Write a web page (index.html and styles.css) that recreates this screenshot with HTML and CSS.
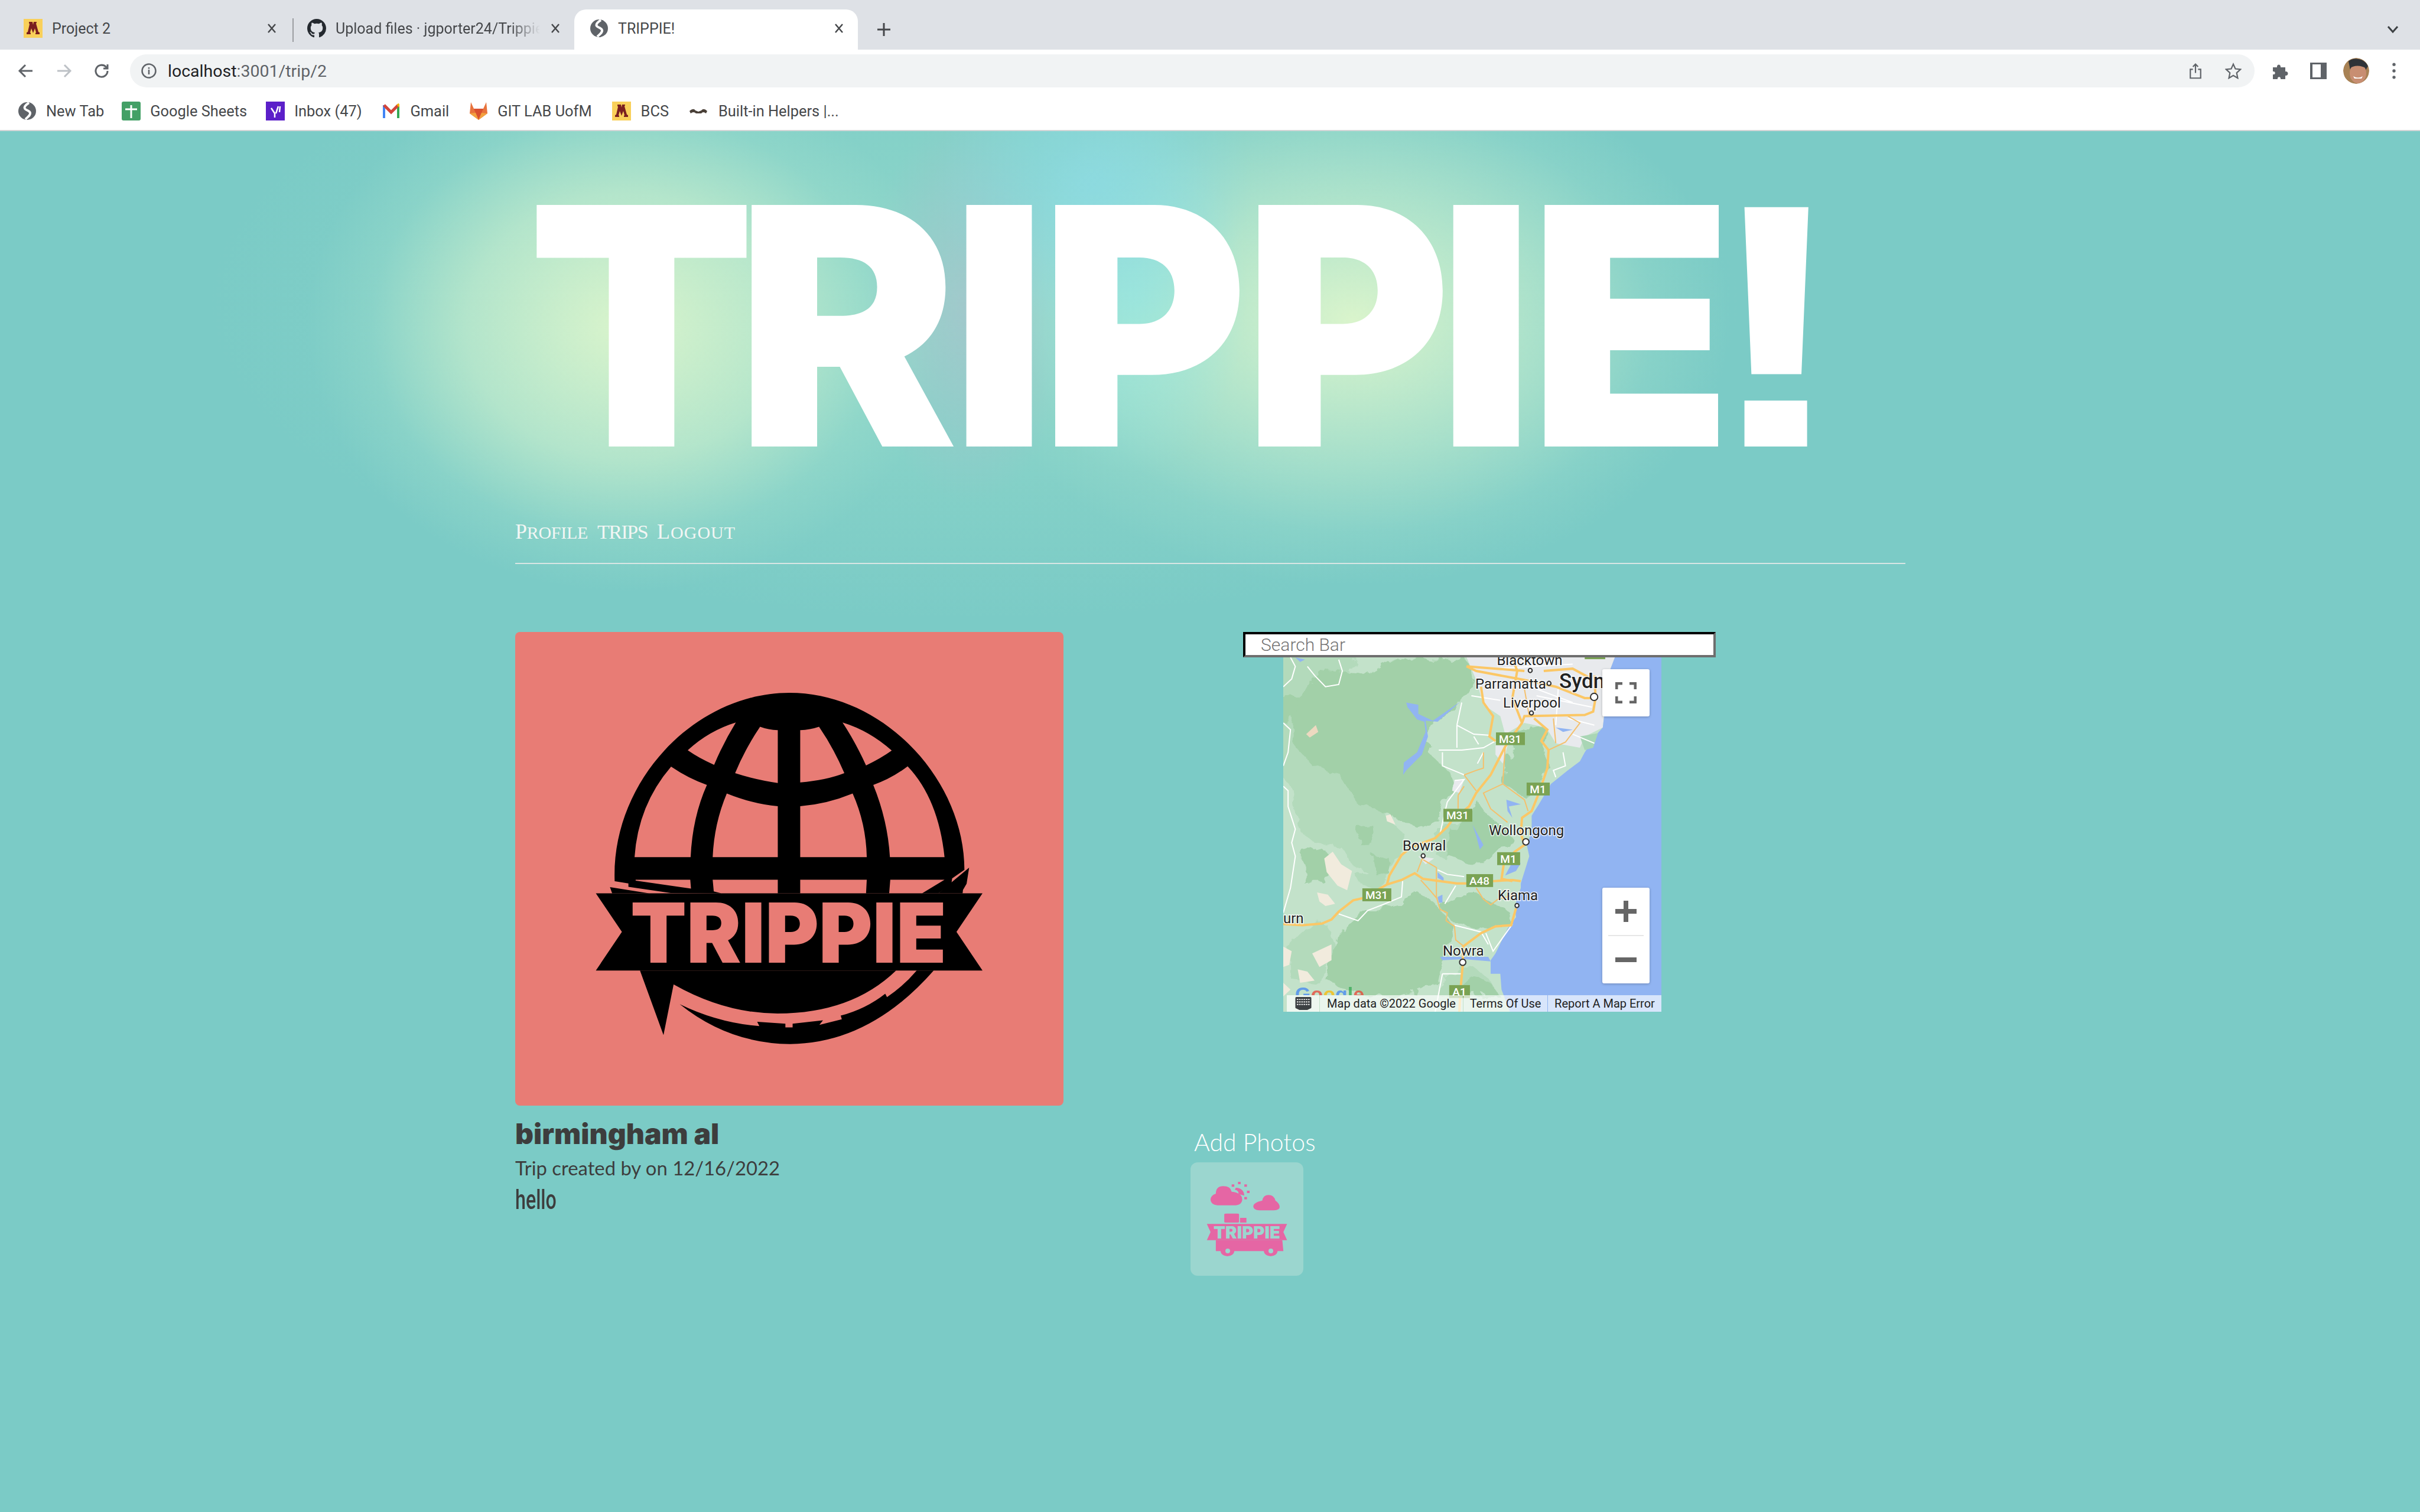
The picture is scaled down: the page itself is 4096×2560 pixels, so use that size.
FILE: index.html
```html
<!DOCTYPE html>
<html lang="en">
<head>
    <meta charset="UTF-8">
    <title>TRIPPIE!</title>
    <link rel="stylesheet" href="styles.css">
</head>
<body>
    <svg class="defs" width="0" height="0">
        <symbol id="globe-fav" viewBox="0 0 32 32">
            <circle cx="16" cy="16" r="15" fill="#5f6368"/>
            <path d="M19 2C13 6 10 9 12 12s8 3 9 7-4 7-8 11" fill="none" stroke="#fff" stroke-width="4"/>
        </symbol>
        <symbol id="umn-fav" viewBox="0 0 32 32">
            <rect width="32" height="32" fill="#f9d05a"/>
            <path d="M5 26h7v-2l-1-1 2-7 3 8 3-8 2 7-1 1v2h7v-3l-2-1-4-14 1-2V5h-5l-1 5-1-5H9v2l1 2-3 13-2 1z" fill="#7a1f1f"/>
        </symbol>
        <filter id="rough" x="-5%" y="-5%" width="110%" height="110%">
            <feTurbulence type="fractalNoise" baseFrequency=".012" numOctaves="4" seed="7"/>
            <feDisplacementMap in="SourceGraphic" scale="70"/>
        </filter>
    </svg>

    <div class="browser">
        <div class="tabstrip">
            <div class="tab">
                <svg class="fav"><use href="#umn-fav"/></svg>
                <span class="tab-title">Project 2</span>
                <svg class="tab-x" viewBox="0 0 16 16"><path d="M2 1l12 14M14 1L2 15"/></svg>
            </div>
            <div class="tab tab-sep">
                <svg class="fav" viewBox="0 0 16 16"><path fill="#24292f" d="M8 0C3.58 0 0 3.58 0 8c0 3.54 2.29 6.53 5.47 7.59.4.07.55-.17.55-.38 0-.19-.01-.82-.01-1.49-2.01.37-2.53-.49-2.69-.94-.09-.23-.48-.94-.82-1.13-.28-.15-.68-.52-.01-.53.63-.01 1.08.58 1.23.82.72 1.21 1.87.87 2.33.66.07-.52.28-.87.51-1.07-1.78-.2-3.64-.89-3.64-3.95 0-.87.31-1.59.82-2.15-.08-.2-.36-1.02.08-2.12 0 0 .67-.21 2.2.82.64-.18 1.32-.27 2-.27.68 0 1.36.09 2 .27 1.53-1.04 2.2-.82 2.2-.82.44 1.1.16 1.92.08 2.12.51.56.82 1.27.82 2.15 0 3.07-1.87 3.75-3.65 3.95.29.25.54.73.54 1.48 0 1.07-.01 1.93-.01 2.2 0 .21.15.46.55.38A8.013 8.013 0 0016 8c0-4.42-3.58-8-8-8z"/></svg>
                <span class="tab-title tab-fade">Upload files · jgporter24/Trippie</span>
                <svg class="tab-x" viewBox="0 0 16 16"><path d="M2 1l12 14M14 1L2 15"/></svg>
            </div>
            <div class="tab tab-active">
                <svg class="fav"><use href="#globe-fav"/></svg>
                <span class="tab-title">TRIPPIE!</span>
                <svg class="tab-x" viewBox="0 0 16 16"><path d="M2 1l12 14M14 1L2 15"/></svg>
            </div>
            <svg class="tab-new" viewBox="0 0 24 24"><path d="M12 1v22M1 12h22"/></svg>
            <svg class="tab-list" viewBox="0 0 20 14"><path d="M2 2l8 9 8-9"/></svg>
        </div>

        <div class="toolbar">
            <svg class="nav-btn" viewBox="0 0 28 28"><path d="M25 14H4M13 4L3 14l10 10"/></svg>
            <svg class="nav-btn nav-off" viewBox="0 0 28 28"><path d="M3 14h21M15 4l10 10-10 10"/></svg>
            <svg class="nav-btn" viewBox="0 0 28 28"><path d="M24 14a10 10 0 1 1-3-7l3 3M24 3v7h-7"/></svg>
            <div class="omnibox">
                <svg class="info" viewBox="0 0 28 28"><circle cx="14" cy="14" r="11.5"/><path d="M14 12v8M14 8v2.5"/></svg>
                <span class="url"><b>localhost</b>:3001/trip/2</span>
                <svg class="omni-icon" viewBox="0 0 24 32"><path d="M12 20V3M7 8l5-5 5 5M7 13H2v17h20V13h-5"/></svg>
                <svg class="omni-icon" viewBox="0 0 32 32"><path d="M16 3l4 9 10 1-7.500 7 2 10-8.500-5-8.500 5 2-10L2 13l10-1z"/></svg>
            </div>
            <div class="tool-icons">
                <svg class="tool-icon tool-puzzle" viewBox="0 0 30 30"><path fill="#5f6368" d="M2 9h7c-1-6 7-6 6 0h8v7c6-1 6 8 0 7v6H15c1-5-6-5-5 0H2v-8c5 1 5-6 0-5z"/></svg>
                <svg class="tool-icon" viewBox="0 0 30 30"><path fill="#5f6368" fill-rule="evenodd" d="M1 1h28v28H1zM5 4v22h14V4z"/></svg>
                <svg class="avatar" viewBox="0 0 44 44">
                    <circle cx="22" cy="22" r="22" fill="#a88255"/>
                    <path d="M9 6C14 0 34-2 42 14L36 24 12 20z" fill="#2f3338"/>
                    <ellipse cx="25" cy="26" rx="14" ry="17" fill="#c88e72"/>
                    <path d="M11 18c6-6 20-6 28 0V9C30 3 16 3 11 9z" fill="#2f3338"/>
                    <path d="M17 31q8 5 16 0l-2 4h-12z" fill="#fff"/>
                    <path d="M0 30l10 14H2z" fill="#22221f"/>
                </svg>
                <svg class="tool-icon tool-dots" viewBox="0 0 8 36"><circle cx="4" cy="5" r="3.200" fill="#5f6368"/><circle cx="4" cy="18" r="3.200" fill="#5f6368"/><circle cx="4" cy="31" r="3.200" fill="#5f6368"/></svg>
            </div>
        </div>

        <div class="bookmarks">
            <a class="bm bm-1"><svg class="fav"><use href="#globe-fav"/></svg>New Tab</a>
            <a class="bm bm-2"><svg class="fav" viewBox="0 0 32 32"><rect width="32" height="32" rx="3" fill="#43a066"/><path d="M16 6v22M6 13h20" stroke="#fff" stroke-width="3"/></svg>Google Sheets</a>
            <a class="bm bm-3"><svg class="fav" viewBox="0 0 32 32"><rect width="32" height="32" fill="#5b1fc9"/><path d="M9 11l6 9v7M21 8l-4 12M24 8l-1 10" stroke="#fff" stroke-width="2.500" fill="none"/></svg>Inbox (47)</a>
            <a class="bm bm-4"><svg class="fav fav-gmail" viewBox="0 0 28 32"><path d="M2 28V6" stroke="#4285f4" stroke-width="4"/><path d="M26 28V6" stroke="#34a853" stroke-width="4"/><path d="M2 6l12 12L26 6" fill="none" stroke="#d2453a" stroke-width="5"/><path d="M25 4l3 4" stroke="#f4b400" stroke-width="4"/></svg>Gmail</a>
            <a class="bm bm-5"><svg class="fav" viewBox="0 0 32 32"><path d="M16 31L1 20 3 1l5 11h16l5-11 2 19z" fill="#e8733c"/><path d="M16 31L8 12h16z" fill="#d9502f"/><path d="M1 20l15 11-5-12zM31 20L16 31l5-12z" fill="#f2a23f"/></svg>GIT LAB UofM</a>
            <a class="bm bm-6"><svg class="fav"><use href="#umn-fav"/></svg>BCS</a>
            <a class="bm bm-7"><svg class="fav" viewBox="0 0 32 32"><path d="M1 16q7-6 10-1l5 2 5-2q4-5 10 1l-2 4q-5-4-8 0h-9q-4-4-9 0z" fill="#4a4038"/></svg>Built-in Helpers |...</a>
        </div>
    </div>

    <div class="page">
        <div class="wrap">
            <h1 class="hero-title"><span>T</span><span>R</span><span>I</span><span>P</span><span>P</span><span>I</span><span>E</span><span class="hero-bang">!</span></h1>
            <nav class="site-nav">
                <a>Profile</a>
                <a class="nav-trips">TRIPS</a>
                <a class="nav-logout">Logout</a>
            </nav>

            <div class="trip">
                <div class="trip-left">
                    <div class="trip-card">
                        <svg class="trip-logo" viewBox="0 0 928 802">
                            <g transform="scale(.6122 .523) translate(-20 -20)">
                                <path fill-rule="evenodd" d="M295 827C285 500 520 217 778 217C1040 217 1262 500 1262 790L1228 818L1226 835L1190 866L1145 866L1207 822L1057 822L1054 866L990 866L992 822L808 822L808 866L746 866L746 822L566 822L569 860L590 866L450 865L333 845L333 834Z
                                M497 403Q555 340 630 313Q595 380 570 450Q530 430 497 403Z
                                M697 327Q720 337 746 338L746 509Q680 497 628 477Q655 400 697 327Z
                                M860 327Q835 337 808 338L808 507Q880 500 930 477Q900 395 860 327Z
                                M925 313Q1000 340 1061 404Q1030 430 990 452Q960 375 925 313Z
                                M451 456Q500 495 550 515Q510 620 505 749L350 749Q360 580 451 456Z
                                M605 543Q680 578 746 584L746 749L566 749Q570 640 605 543Z
                                M808 584Q880 578 953 543Q990 640 992 749L808 749Z
                                M1105 455Q1190 560 1207 749L1056 749Q1050 630 1010 515Q1060 495 1105 455Z
                                M353 822L504 822L506 851L353 825Z"/>
                                <path d="M243 866H1312L1240 991L1312 1116H243L315 991Z"/>
                                <path d="M282 846L390 866H288Z"/>
                                <path d="M1275 783L1268 835L1258 855L1257 866H1190Z"/>
                                <path d="M365 1116L430 1325L458 1161Q600 1255 745 1255Q950 1255 1073 1116Z"/>
                                <path d="M475 1225Q580 1285 695 1296L689 1282L767 1288V1300H787V1288L871 1277L861 1292L923 1274L920 1262Q990 1240 1043 1191L1048 1202Q1095 1165 1130 1116H1177Q1000 1352 780 1354Q610 1352 475 1225Z"/>
                            </g>
                            <text class="logo-text" x="195" y="560" textLength="535" lengthAdjust="spacingAndGlyphs">TRIPPIE</text>
                        </svg>
                    </div>
                    <h2 class="trip-name">birmingham al</h2>
                    <p class="trip-meta">Trip created by on 12/16/2022</p>
                    <p class="trip-desc">hello</p>
                </div>

                <div class="trip-right">
                    <input class="search" type="text" placeholder="Search Bar">
                    <div class="map">
                        <svg class="map-svg" viewBox="0 0 640 600">
                            <g transform="scale(.4082 .3827)">
                                <rect width="1568" height="1568" fill="#c3e2ca"/>
                                <g fill="#b3dabb" filter="url(#rough)">
                                    <path d="M-40 -40H300L200 300L300 460L420 700L520 800L470 880L420 960L300 930L240 840L130 820L60 760L40 600L-40 460Z"/>
                                    <path d="M640 760L700 720L760 700L680 900L620 860Z"/>
                                    <path d="M20 1230L180 1180L220 1300L150 1440L30 1420Z"/>
                                    <path d="M660 1420L790 1370L850 1420L900 1500H640Z"/>
                                    <path d="M300 960L420 900L440 960L400 1030L320 1000Z"/>
                                </g>
                                <g fill="#a2d0a8" filter="url(#rough)">
                                    <path d="M60 170L180 60L330 70L430 10L750 0L790 100L740 200L650 290L600 340L600 420L680 500L710 560L660 650L640 720L560 760L440 690L380 670L300 640L230 510L120 480L40 380Z"/>
                                    <path d="M-30 170L60 170L60 270L-30 300Z"/>
                                    <path d="M1040 290L1100 320L1080 430L1100 480L1040 610L1000 620L910 560L920 440L970 340Z"/>
                                    <path d="M790 620L840 690L920 760L950 800L900 860L830 910L770 910L680 880L690 760L750 690Z"/>
                                    <path d="M540 1020L640 1100L700 1180L710 1270L660 1330L640 1430L540 1490L340 1500L180 1430L220 1230L340 1130L490 1090Z"/>
                                    <path d="M700 1040L800 1040L880 1100L930 1120L940 1180L820 1210L700 1170L650 1100Z"/>
                                    <path d="M90 860L160 840L200 900L170 1000L90 1000Z"/>
                                    <path d="M310 750L370 740L380 830L320 830Z"/>
                                    <path d="M370 870L430 880L440 960L390 970Z"/>
                                    <path d="M780 1420L860 1440L900 1500H700Z"/>
                                </g>
                                <g fill="#f1ebdd">
                                    <path d="M170 890L205 860L240 915L285 945L265 1030L225 1010L180 950Z"/>
                                    <path d="M140 1040L185 1050L215 1090L175 1100L150 1080Z"/>
                                    <path d="M425 700L445 695L465 740L430 725Z"/>
                                    <path d="M0 1280L35 1300L25 1360L0 1370Z"/>
                                    <path d="M120 1310L200 1270L200 1340L150 1370Z"/>
                                    <path d="M60 1380L100 1390L130 1430L70 1440Z"/>
                                    <path d="M0 1440L30 1470L0 1500Z"/>
                                </g>
                                <path d="M95 340L135 300L145 330L110 355Z" fill="#edd9c0"/>
                                <g fill="#e8eaed">
                                    <path d="M760 0H1375L1350 70L1325 310L1250 350L1230 400L1130 380L1090 310L1000 290L920 340L900 260L830 210L800 100Z"/>
                                    <path d="M880 390L930 390L910 470L880 430Z"/>
                                    <path d="M710 545L750 540L730 600L700 590Z"/>
                                    <path d="M560 880L625 890L590 915Z"/>
                                </g>
                                <path d="M1375 0H1568V1568H940L905 1470L900 1400L860 1400L860 1340L880 1310L930 1200L965 1150L960 1100L985 1020L985 1000L1020 880L1010 830L1030 770L1030 700L1060 650L1110 560L1180 500L1230 460L1250 420L1300 340L1325 310L1350 70Z" fill="#91b4f2"/>
                                <path d="M1230 350L1305 335L1285 400L1250 410Z" fill="#a9d6b5"/>
                                <g fill="#91b4f2">
                                    <path d="M510 200L560 210L560 250L620 280L735 195L640 285L590 280L600 350L575 430L510 500L497 520L500 465L555 420L590 330L585 285L555 275L515 220Z"/>
                                    <path d="M925 630L985 650L935 660L950 710L930 680Z"/>
                                    <path d="M785 740L830 830L815 850L800 790Z"/>
                                    <path d="M640 950L665 975L665 990L640 975Z"/>
                                    <path d="M640 1060L660 1050L660 1085L645 1085Z"/>
                                    <path d="M945 915L985 910L965 945L920 965Z"/>
                                    <path d="M50 0L90 10L70 20Z"/>
                                    <path d="M1130 310L1200 320L1160 330Z"/>
                                    <path d="M650 1325L850 1325L860 1345L750 1335L660 1340Z"/>
                                </g>
                                <g class="map-white">
                                    <path d="M0 130L35 95L50 40L30 0M100 40L130 80L175 130L230 120L245 60L230 10"/>
                                    <path d="M0 290L30 320L20 420L0 480M0 570L20 590L20 660L50 760L35 820L50 880L30 1020L0 1130"/>
                                    <path d="M230 1135L310 1165L350 1120L410 1095L490 1060L495 990"/>
                                    <path d="M645 410L740 410L830 400L880 370M660 420L660 480L740 515L750 520"/>
                                    <path d="M720 300L790 340L860 345M720 300L720 400M790 350L810 385M830 420L805 470"/>
                                    <path d="M740 200L720 300M780 170L900 190M680 640L750 540L710 545M680 640L650 780"/>
                                    <path d="M640 940L680 960L750 970M715 1010L670 1090M710 1185L820 1215L850 1270M660 1400L740 1400M630 1568L660 1400"/>
                                    <path d="M1160 420L1170 480L1120 500L1130 530M840 1220L870 1300L950 1180"/>
                                    <path d="M1000 120L1200 200M1130 300L1140 140M1050 170L1280 220M1180 270L1290 300M1200 340L1290 380M880 50L1200 30"/>
                                </g>
                                <g class="map-road-thin">
                                    <path d="M920 400L910 560L830 600L860 670L930 730M910 560L1000 630L1015 680"/>
                                    <path d="M750 520L800 500L830 490L830 420M750 520L800 590M725 610L750 570M725 610L725 670"/>
                                    <path d="M580 880L555 950M580 895L635 930L635 1060L650 1115L680 1130L675 1165L710 1190L715 1250L745 1275"/>
                                    <path d="M570 985L600 1020L640 1070M800 1020L830 1070L860 1095L890 1070L960 1050"/>
                                    <path d="M1100 410L1170 375L1230 290L1180 260M1120 270L1130 380M1000 140L1020 260"/>
                                </g>
                                <g class="map-road">
                                    <path d="M0 1180L80 1185L160 1178L200 1160L230 1125L290 1075L330 1065L430 1005L490 985L545 955L580 980L720 1000L760 1000L870 990L950 985L985 990"/>
                                    <path d="M430 1005L440 965L490 875L530 840L630 800L680 750L700 720L770 660L800 600L860 520L920 395L990 290L1000 260L1250 255L1285 240L1295 180L1290 80"/>
                                    <path d="M1100 410L1095 490L1060 600L1030 680L990 710L985 780L1000 830L960 860L915 910L905 980L950 990"/>
                                    <path d="M1100 410L1070 370L1095 320L1040 270M760 40L800 60L1000 100L1130 130L1250 180L1290 180"/>
                                    <path d="M760 40L1000 60M1080 60L1200 50L1270 90M990 290L950 180L970 60L950 0M820 130L830 200L870 260L855 350L880 370"/>
                                    <path d="M745 1350L745 1280L820 1220L880 1190L945 1185L965 1110M745 1350L735 1470L730 1568"/>
                                </g>
                                <g fill="#7aa354">
                                    <rect x="882" y="332" width="120" height="56"/>
                                    <rect x="1009" y="554" width="96" height="57"/>
                                    <rect x="664" y="670" width="120" height="57"/>
                                    <rect x="887" y="862" width="95" height="57"/>
                                    <rect x="759" y="959" width="111" height="57"/>
                                    <rect x="328" y="1022" width="120" height="57"/>
                                    <rect x="688" y="1450" width="86" height="57"/>
                                    <rect x="1250" y="-40" width="85" height="48"/>
                                </g>
                                <g class="map-dot">
                                    <ellipse cx="1289" cy="175" rx="15" ry="16"/>
                                    <ellipse cx="1024" cy="58" rx="8" ry="9"/>
                                    <ellipse cx="1102" cy="115" rx="8" ry="9"/>
                                    <ellipse cx="1029" cy="246" rx="8" ry="9"/>
                                    <ellipse cx="1006" cy="816" rx="13" ry="14"/>
                                    <ellipse cx="580" cy="878" rx="8" ry="9"/>
                                    <ellipse cx="969" cy="1098" rx="8" ry="9"/>
                                    <ellipse cx="744" cy="1349" rx="13" ry="14"/>
                                </g>
                            </g>
                            <text class="map-label" x="417" y="13" text-anchor="middle">Blacktown</text>
                            <text class="map-label" x="325" y="53">Parramatta</text>
                            <text class="map-label map-city" x="467" y="52">Sydney</text>
                            <text class="map-label" x="372" y="85">Liverpool</text>
                            <text class="map-label" x="348" y="301">Wollongong</text>
                            <text class="map-label" x="202" y="327">Bowral</text>
                            <text class="map-label" x="363" y="411">Kiama</text>
                            <text class="map-label" x="270" y="505">Nowra</text>
                            <text class="map-label" x="0" y="450">urn</text>
                            <text class="map-shield" x="384" y="145">M31</text>
                            <text class="map-shield" x="431" y="230">M1</text>
                            <text class="map-shield" x="295" y="274">M31</text>
                            <text class="map-shield" x="381" y="348">M1</text>
                            <text class="map-shield" x="332" y="385">A48</text>
                            <text class="map-shield" x="158" y="409">M31</text>
                            <text class="map-shield" x="298" y="573">A1</text>
                        </svg>
                        <button class="map-btn map-full">
                            <svg viewBox="0 0 36 36"><path d="M2 12V2h10M24 2h10v10M34 24v10H24M12 34H2V24"/></svg>
                        </button>
                        <div class="map-zoom">
                            <button class="map-zoom-btn"><span class="zoom-plus"></span></button>
                            <span class="map-zoom-sep"></span>
                            <button class="map-zoom-btn"><span class="zoom-minus"></span></button>
                        </div>
                        <span class="google"><i class="g-b">G</i><i class="g-r">o</i><i class="g-y">o</i><i class="g-b">g</i><i class="g-g">l</i><i class="g-r">e</i></span>
                        <div class="map-foot">
                            <span class="foot-kbd">
                                <svg viewBox="0 0 32 26"><path fill="#3c4043" d="M2 0h28a2 2 0 0 1 2 2v19a2 2 0 0 1-2 2l-6 3H8l-6-3a2 2 0 0 1-2-2V2a2 2 0 0 1 2-2z"/><path stroke="#fff" stroke-width="2" stroke-dasharray="3 1.500" d="M3 5h26M3 10h26M3 15h26"/></svg>
                            </span>
                            <span class="foot-item foot-data">Map data ©2022 Google</span>
                            <span class="foot-item foot-terms">Terms Of Use</span>
                            <span class="foot-item foot-error">Report A Map Error</span>
                        </div>
                    </div>
                    <div class="photos">
                        <p class="photos-label">Add Photos</p>
                        <div class="photo-thumb">
                            <svg viewBox="0 0 191 192">
                                <g fill="#e566a4" transform="scale(.893 .3333) translate(-1294 -321)">
                                    <path d="M1345 539Q1332 535 1332 510Q1332 490 1342 480Q1342 442 1356 442Q1370 442 1372 470Q1392 475 1392 510Q1392 535 1380 539Z"/>
                                    <path d="M1425 565Q1413 562 1413 545Q1413 525 1430 515Q1432 487 1442 487Q1452 487 1455 515Q1463 530 1463 548Q1463 562 1452 565Z"/>
                                    <path d="M1380 450Q1395 452 1396 490L1385 482Q1386 465 1378 460Z"/>
                                    <rect x="1384" y="420" width="5" height="12"/>
                                    <rect x="1372" y="433" width="5" height="12"/>
                                    <rect x="1396" y="433" width="5" height="12"/>
                                    <rect x="1401" y="465" width="5" height="12"/>
                                    <rect x="1396" y="497" width="5" height="12"/>
                                    <rect x="1358" y="581" width="28" height="46" rx="4"/>
                                    <rect x="1388" y="603" width="12" height="24"/>
                                    <path d="M1325 634H1477L1470 675L1477 716H1325L1332 675Z"/>
                                    <path d="M1342 716H1468L1470 772H1342Z"/>
                                    <ellipse cx="1364" cy="770" rx="13" ry="28"/>
                                    <ellipse cx="1446" cy="770" rx="13" ry="28"/>
                                </g>
                                <g fill="#9bd6cf">
                                    <circle cx="63" cy="150" r="4"/>
                                    <circle cx="136" cy="150" r="4"/>
                                </g>
                                <text class="thumb-text" x="39" y="129" textLength="113" lengthAdjust="spacingAndGlyphs">TRIPPIE</text>
                            </svg>
                        </div>
                    </div>
                </div>
            </div>
        </div>
    </div>
</body>
</html>
```

FILE: styles.css
```css
* {
    box-sizing: border-box;
    margin: 0;
    padding: 0;
}

body {
    width: 4096px;
    height: 2560px;
    display: flex;
    flex-direction: column;
    font-family: Roboto, Arial, sans-serif;
    overflow: hidden;
}

.defs {
    position: absolute;
}

/* browser chrome */
.browser {
    flex: none;
    background: #fff;
    border-bottom: 2px solid #d3d5d6;
}

.tabstrip {
    height: 84px;
    background: #dee1e6;
    display: flex;
    align-items: flex-end;
    padding-left: 12px;
}

.tab {
    width: 480px;
    height: 68px;
    display: flex;
    align-items: center;
    padding: 0 24px 4px 28px;
    font-size: 25px;
    color: #45474a;
    position: relative;
}

.tab-sep::before {
    content: '';
    position: absolute;
    left: 3px;
    top: 15px;
    height: 40px;
    border-left: 2px solid #9b9da1;
}

.tab-active {
    background: #fff;
    border-radius: 20px 20px 0 0;
    padding-left: 26px;
}

.fav {
    width: 32px;
    height: 32px;
    flex: none;
}

.tab-title {
    flex: 1;
    margin-left: 16px;
    white-space: nowrap;
    overflow: hidden;
}

.tab-fade {
    -webkit-mask-image: linear-gradient(90deg, #000 85%, transparent);
    mask-image: linear-gradient(90deg, #000 85%, transparent);
    margin-right: 18px;
}

.tab-x {
    width: 16px;
    height: 16px;
    flex: none;
    fill: none;
    stroke: #45474a;
    stroke-width: 2.5;
}

.tab-new {
    width: 24px;
    height: 26px;
    margin: 0 0 21px 32px;
    fill: none;
    stroke: #45474a;
    stroke-width: 3;
}

.tab-list {
    width: 20px;
    height: 14px;
    margin: 0 36px 27px auto;
    fill: none;
    stroke: #3c4043;
    stroke-width: 3;
}

.toolbar {
    height: 72px;
    display: flex;
    align-items: flex-start;
    padding: 8px 0 0 30px;
}

.nav-btn {
    width: 28px;
    height: 28px;
    margin: 14px 36px 0 0;
    flex: none;
    fill: none;
    stroke: #5f6368;
    stroke-width: 3;
}

.nav-off {
    stroke: #bdc1c6;
}

.omnibox {
    width: 3596px;
    height: 56px;
    margin-left: -2px;
    display: flex;
    align-items: center;
    padding: 0 22px 0 18px;
    background: #f1f3f4;
    border-radius: 28px;
}

.info {
    width: 28px;
    height: 28px;
    fill: none;
    stroke: #5f6368;
    stroke-width: 2.5;
}

.url {
    flex: 1;
    margin-left: 18px;
    font-size: 28.500px;
    color: #5f6368;
}

.url b {
    font-weight: 400;
    color: #202124;
}

.omni-icon {
    width: 28px;
    height: 28px;
    margin-left: 36px;
    fill: none;
    stroke: #5f6368;
    stroke-width: 2.5;
}

.tool-icons {
    display: flex;
    align-items: center;
    height: 56px;
}

.tool-icon {
    width: 30px;
    height: 30px;
    margin-left: 34px;
    flex: none;
}

.tool-puzzle {
    margin-left: 29px;
}

.tool-dots {
    margin-left: 27px;
}

.avatar {
    width: 44px;
    height: 44px;
    margin-left: 27px;
    border-radius: 50%;
}

.bookmarks {
    height: 64px;
    display: flex;
    align-items: center;
    font-size: 25.400px;
    color: #45474a;
}

.bm {
    display: flex;
    align-items: center;
    gap: 16px;
    white-space: nowrap;
}

.bm-1 { margin-left: 30px; }
.bm-2 { margin-left: 30px; }
.bm-3 { margin-left: 32px; }
.bm-4 { margin-left: 35px; gap: 19px; }
.bm-5 { margin-left: 34px; }
.bm-6 { margin-left: 34px; gap: 17px; }
.bm-7 { margin-left: 34px; gap: 18px; }

.fav-gmail {
    width: 28px;
}

/* page */
.page {
    flex: 1;
    background-color: #7bcbc6;
    background-image:
        radial-gradient(ellipse 270px 240px at 1850px 90px, rgba(140, 218, 226, .85), rgba(140, 218, 226, .4) 55%, transparent),
        radial-gradient(ellipse 190px 300px at 1920px 280px, rgba(155, 232, 224, .8), transparent),
        radial-gradient(ellipse 180px 330px at 1640px 300px, rgba(180, 185, 205, .5), transparent),
        radial-gradient(ellipse 540px 450px at 1060px 330px, rgba(222, 246, 204, .95), rgba(205, 240, 205, .65) 50%, rgba(170, 228, 205, .25) 80%, transparent),
        radial-gradient(ellipse 640px 450px at 2290px 320px, rgba(222, 246, 204, .95), rgba(195, 236, 205, .6) 50%, rgba(165, 225, 205, .25) 80%, transparent),
        radial-gradient(ellipse 1300px 540px at 1650px 290px, rgba(160, 226, 205, .55), transparent);
    background-repeat: no-repeat;
}

.wrap {
    width: 2353px;
    margin-left: 872px;
}

.hero-title {
    height: 639px;
    padding: 30px 0 0 21px;
    font-family: Inter, Roboto, sans-serif;
    font-size: 562px;
    line-height: 600px;
    font-weight: 900;
    color: #fff;
    white-space: nowrap;
}

/* hand kerned, each letter closes up on the next */
.hero-title span:nth-child(1) { letter-spacing: -33px; }
.hero-title span:nth-child(2) { letter-spacing: -12px; }
.hero-title span:nth-child(3) { letter-spacing: -12px; }
.hero-title span:nth-child(4) { letter-spacing: -25px; }
.hero-title span:nth-child(5) { letter-spacing: -40px; }
.hero-title span:nth-child(6) { letter-spacing: -9px; }
.hero-title span:nth-child(7) { letter-spacing: -30px; }

.hero-title span:nth-child(4),
.hero-title span:nth-child(5) {
    display: inline-block;
    transform: scaleX(.95);
    transform-origin: left center;
}

.hero-title .hero-bang {
    display: inline-block;
    margin-left: 7px;
    font-family: "Liberation Sans", sans-serif;
    font-weight: 700;
    font-size: 589px;
    transform: scaleX(1.28);
}

.site-nav {
    height: 94px;
    display: flex;
    gap: 16px;
    align-items: baseline;
    padding-top: 16px;
    border-bottom: 2px solid #d8e6e4;
    font-family: "Liberation Serif", serif;
    font-size: 30px;
    letter-spacing: -.3px;
    line-height: 46px;
    text-transform: uppercase;
    color: #f2f6f4;
}

.site-nav a::first-letter {
    font-size: 36px;
}

.site-nav .nav-trips {
    font-size: 34px;
    letter-spacing: -1.500px;
}

.site-nav .nav-trips::first-letter {
    font-size: 34px;
}

.site-nav .nav-logout {
    letter-spacing: 1px;
}

.trip {
    display: flex;
    padding-top: 115px;
}

.trip-left {
    width: 928px;
    flex: none;
}

.trip-card {
    height: 802px;
    background: #e87c75;
    border-radius: 8px;
}

.trip-logo {
    display: block;
    width: 928px;
    height: 802px;
}

.logo-text {
    font-family: Inter, Roboto, sans-serif;
    font-weight: 900;
    font-size: 140px;
    fill: #e87c75;
}

.trip-name {
    margin-top: 18px;
    font-family: Inter, Lato, sans-serif;
    font-size: 48px;
    line-height: 60px;
    font-weight: 900;
    color: #3d3d3d;
}

.trip-meta {
    margin-top: 6px;
    font-family: Lato, sans-serif;
    font-size: 32.800px;
    line-height: 44px;
    color: #3d3d3d;
}

.trip-desc {
    margin-top: 6px;
    font-family: Roboto, sans-serif;
    font-weight: 500;
    font-size: 46px;
    line-height: 50px;
    color: #3d3d3d;
    transform: scaleX(.7);
    transform-origin: left center;
}

.trip-right {
    margin-left: 215px;
    display: flex;
    flex-direction: column;
}

.search {
    width: 800px;
    height: 43px;
    margin-left: 89px;
    padding: 0 26px;
    border: 4px inset #767676;
    border-color: #222 #6e6e6e #6e6e6e #222;
    background: #fff;
    font-family: Roboto, sans-serif;
    font-weight: 300;
    font-size: 30px;
}

.search::placeholder {
    color: #757575;
}

.map {
    width: 640px;
    height: 600px;
    margin-left: 157px;
    position: relative;
    overflow: hidden;
    background: #c3e2ca;
}

.map-svg {
    display: block;
    width: 640px;
    height: 600px;
}

.map-white path {
    fill: none;
    stroke: #fff;
    stroke-width: 2;
    vector-effect: non-scaling-stroke;
}

.map-road path {
    fill: none;
    stroke: #fbc766;
    stroke-width: 4;
    vector-effect: non-scaling-stroke;
}

.map-road-thin path {
    fill: none;
    stroke: #f5c06c;
    stroke-width: 2;
    vector-effect: non-scaling-stroke;
}

.map-dot ellipse {
    fill: #fff;
    stroke: #333;
    stroke-width: 2;
    vector-effect: non-scaling-stroke;
}

.map-label {
    font-family: Roboto, sans-serif;
    font-size: 24px;
    fill: #222;
    stroke: rgba(255, 255, 255, .8);
    stroke-width: 3px;
    paint-order: stroke;
}

.map-city {
    font-size: 35px;
    font-weight: 500;
}

.map-shield {
    font-family: Roboto, sans-serif;
    font-size: 19px;
    font-weight: 500;
    fill: #fff;
    text-anchor: middle;
}

.map-btn,
.map-zoom {
    position: absolute;
    left: 540px;
    width: 80px;
    background: #fff;
    border: none;
    border-radius: 3px;
    box-shadow: 0 1px 4px rgba(0, 0, 0, .25);
}

.map-full {
    top: 20px;
    height: 80px;
    display: flex;
    align-items: center;
    justify-content: center;
}

.map-full svg {
    width: 36px;
    height: 36px;
    fill: none;
    stroke: #666;
    stroke-width: 5;
}

.map-zoom {
    top: 390px;
    height: 162px;
    display: flex;
    flex-direction: column;
    align-items: center;
}

.map-zoom-btn {
    flex: 1;
    width: 80px;
    background: none;
    border: none;
    display: flex;
    align-items: center;
    justify-content: center;
}

.map-zoom-sep {
    width: 60px;
    height: 2px;
    background: #e6e6e6;
}

.zoom-plus,
.zoom-minus {
    width: 36px;
    height: 8px;
    background: #666;
    position: relative;
}

.zoom-plus::after {
    content: '';
    position: absolute;
    left: 14px;
    top: -14px;
    width: 8px;
    height: 36px;
    background: #666;
}

.google {
    position: absolute;
    left: 20px;
    bottom: 28px;
    display: flex;
    font-family: "Liberation Sans", sans-serif;
    font-weight: 700;
    font-size: 34px;
    line-height: 30px;
    opacity: .75;
}

.google i {
    display: block;
    height: 17px;
    overflow: hidden;
    font-style: normal;
}

.g-b { color: #4285f4; }
.g-r { color: #ea4335; }
.g-y { color: #fbbc05; }
.g-g { color: #34a853; }

.map-foot {
    position: absolute;
    left: 6px;
    right: 0;
    bottom: 0;
    height: 28px;
    display: flex;
    font-size: 20px;
    line-height: 28px;
    color: #222;
    white-space: nowrap;
}

.foot-kbd {
    width: 55px;
    background: rgba(255, 255, 255, .72);
    display: flex;
    align-items: center;
    justify-content: center;
}

.foot-kbd svg {
    width: 32px;
    height: 22px;
}

.foot-item {
    background: rgba(255, 255, 255, .65);
    margin-left: 1px;
    text-align: center;
}

.foot-data { width: 242px; }
.foot-terms { width: 142px; }
.foot-error { flex: 1; }

.photos-label {
    margin: 197px 0 0 6px;
    font-family: Lato, sans-serif;
    font-weight: 300;
    font-size: 41px;
    line-height: 48px;
    color: #fff;
}

.photo-thumb {
    width: 191px;
    height: 192px;
    margin-top: 10px;
    background: #9bd6cf;
    border-radius: 12px;
}

.photo-thumb svg {
    display: block;
    width: 191px;
    height: 192px;
}

.thumb-text {
    font-family: Inter, Roboto, sans-serif;
    font-weight: 900;
    font-size: 29px;
    fill: #9bd6cf;
}
```
